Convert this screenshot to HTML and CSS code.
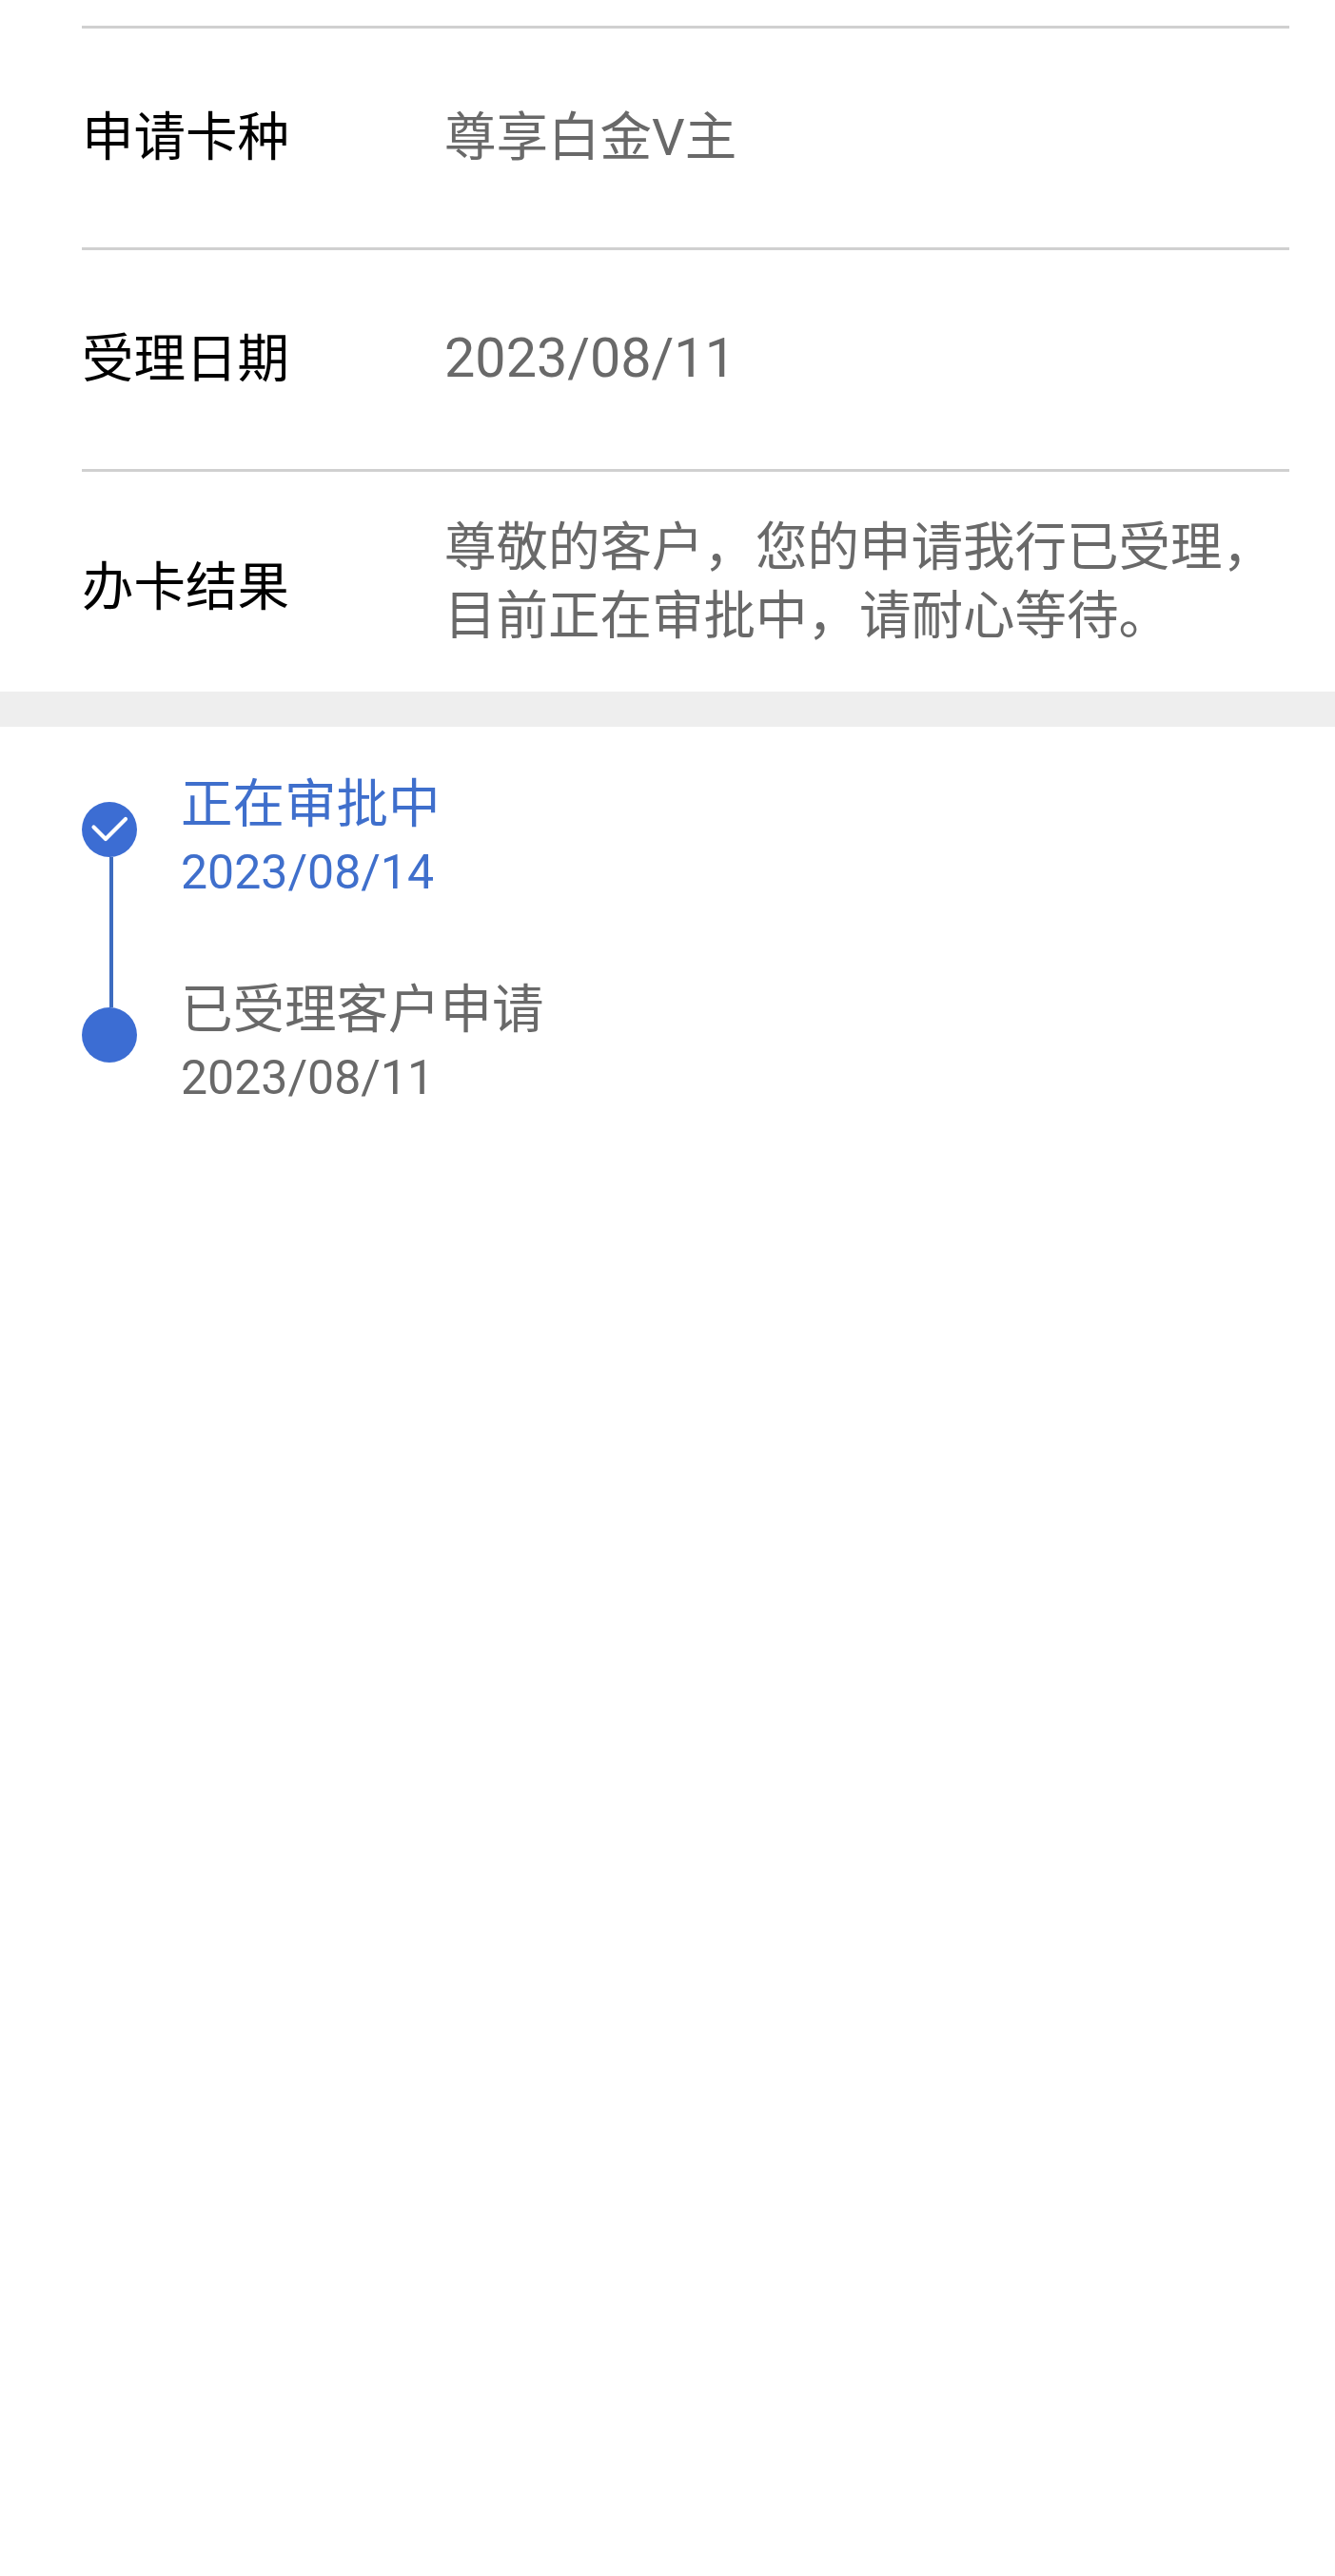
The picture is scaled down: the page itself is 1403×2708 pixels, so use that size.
FILE: index.html
```html
<!DOCTYPE html>
<html lang="zh-CN">
<head>
<meta charset="utf-8">
<title>办卡进度</title>
<link rel="stylesheet" href="styles.css">
</head>
<body>
<section class="details">
  <div class="row">
    <div class="label">申请卡种</div>
    <div class="value">尊享白金V主</div>
  </div>
  <div class="row">
    <div class="label">受理日期</div>
    <div class="value value-date">2023/08/11</div>
  </div>
  <div class="row row-result">
    <div class="label">办卡结果</div>
    <div class="value">尊敬的客户，您的申请我行已受理，<br>目前正在审批中，请耐心等待。</div>
  </div>
</section>
<div class="band"></div>
<section class="timeline">
  <div class="step step-active">
    <div class="marker">
      <div class="dot">
        <svg class="check" viewBox="0 0 58 58" width="58" height="58" aria-hidden="true"><path d="M12.5 26.5 L25 39 L46 18" fill="none" stroke="#fff" stroke-width="4.2" stroke-linecap="round" stroke-linejoin="round"/></svg>
      </div>
      <div class="line"></div>
    </div>
    <div class="text">
      <div class="title">正在审批中</div>
      <div class="date">2023/08/14</div>
    </div>
  </div>
  <div class="step">
    <div class="marker">
      <div class="dot"></div>
    </div>
    <div class="text">
      <div class="title">已受理客户申请</div>
      <div class="date">2023/08/11</div>
    </div>
  </div>
</section>
</body>
</html>
```
FILE: styles.css
```css
* { box-sizing: border-box; }
html, body { margin: 0; padding: 0; background: #fff; }
body {
  height: 2708px;
  overflow: hidden;
  font-family: Roboto, "Noto Sans CJK SC", sans-serif;
  padding-top: 27px;
}
.details { padding: 0 48px 0 86px; }
.row {
  display: flex;
  align-items: center;
  height: 233px;
  padding-bottom: 3px;
  border-top: 3px solid #d0d0d0;
}
.row-result { height: 234px; padding-bottom: 0; }
.row-result .label { margin-top: 11px; }
.row-result .value { margin-top: -1px; }
.label {
  width: 381px;
  flex: none;
  font-size: 54.5px;
  line-height: 72px;
  color: #000;
}
.value {
  font-size: 54.5px;
  line-height: 72px;
  color: #696969;
}
.value-date { font-size: 57.5px; }
.band { height: 37px; background: #eee; }
.timeline { padding: 79px 0 0 86px; }
.step { display: flex; height: 216px; }
.marker {
  width: 58px;
  flex: none;
  display: flex;
  flex-direction: column;
  align-items: center;
}
.dot {
  width: 58px;
  height: 58px;
  flex: none;
  border-radius: 50%;
  background: #3c6dd3;
}
.check { display: block; }
.line { width: 4px; flex: 1; margin-left: 4px; background: #3d6cc0; }
.text { margin: -35px 0 0 46px; }
.title { font-size: 54.5px; line-height: 74px; color: #696969; }
.date { font-size: 50px; line-height: 71px; color: #696969; }
.step-active .title, .step-active .date { color: #3f6fcc; }
```
